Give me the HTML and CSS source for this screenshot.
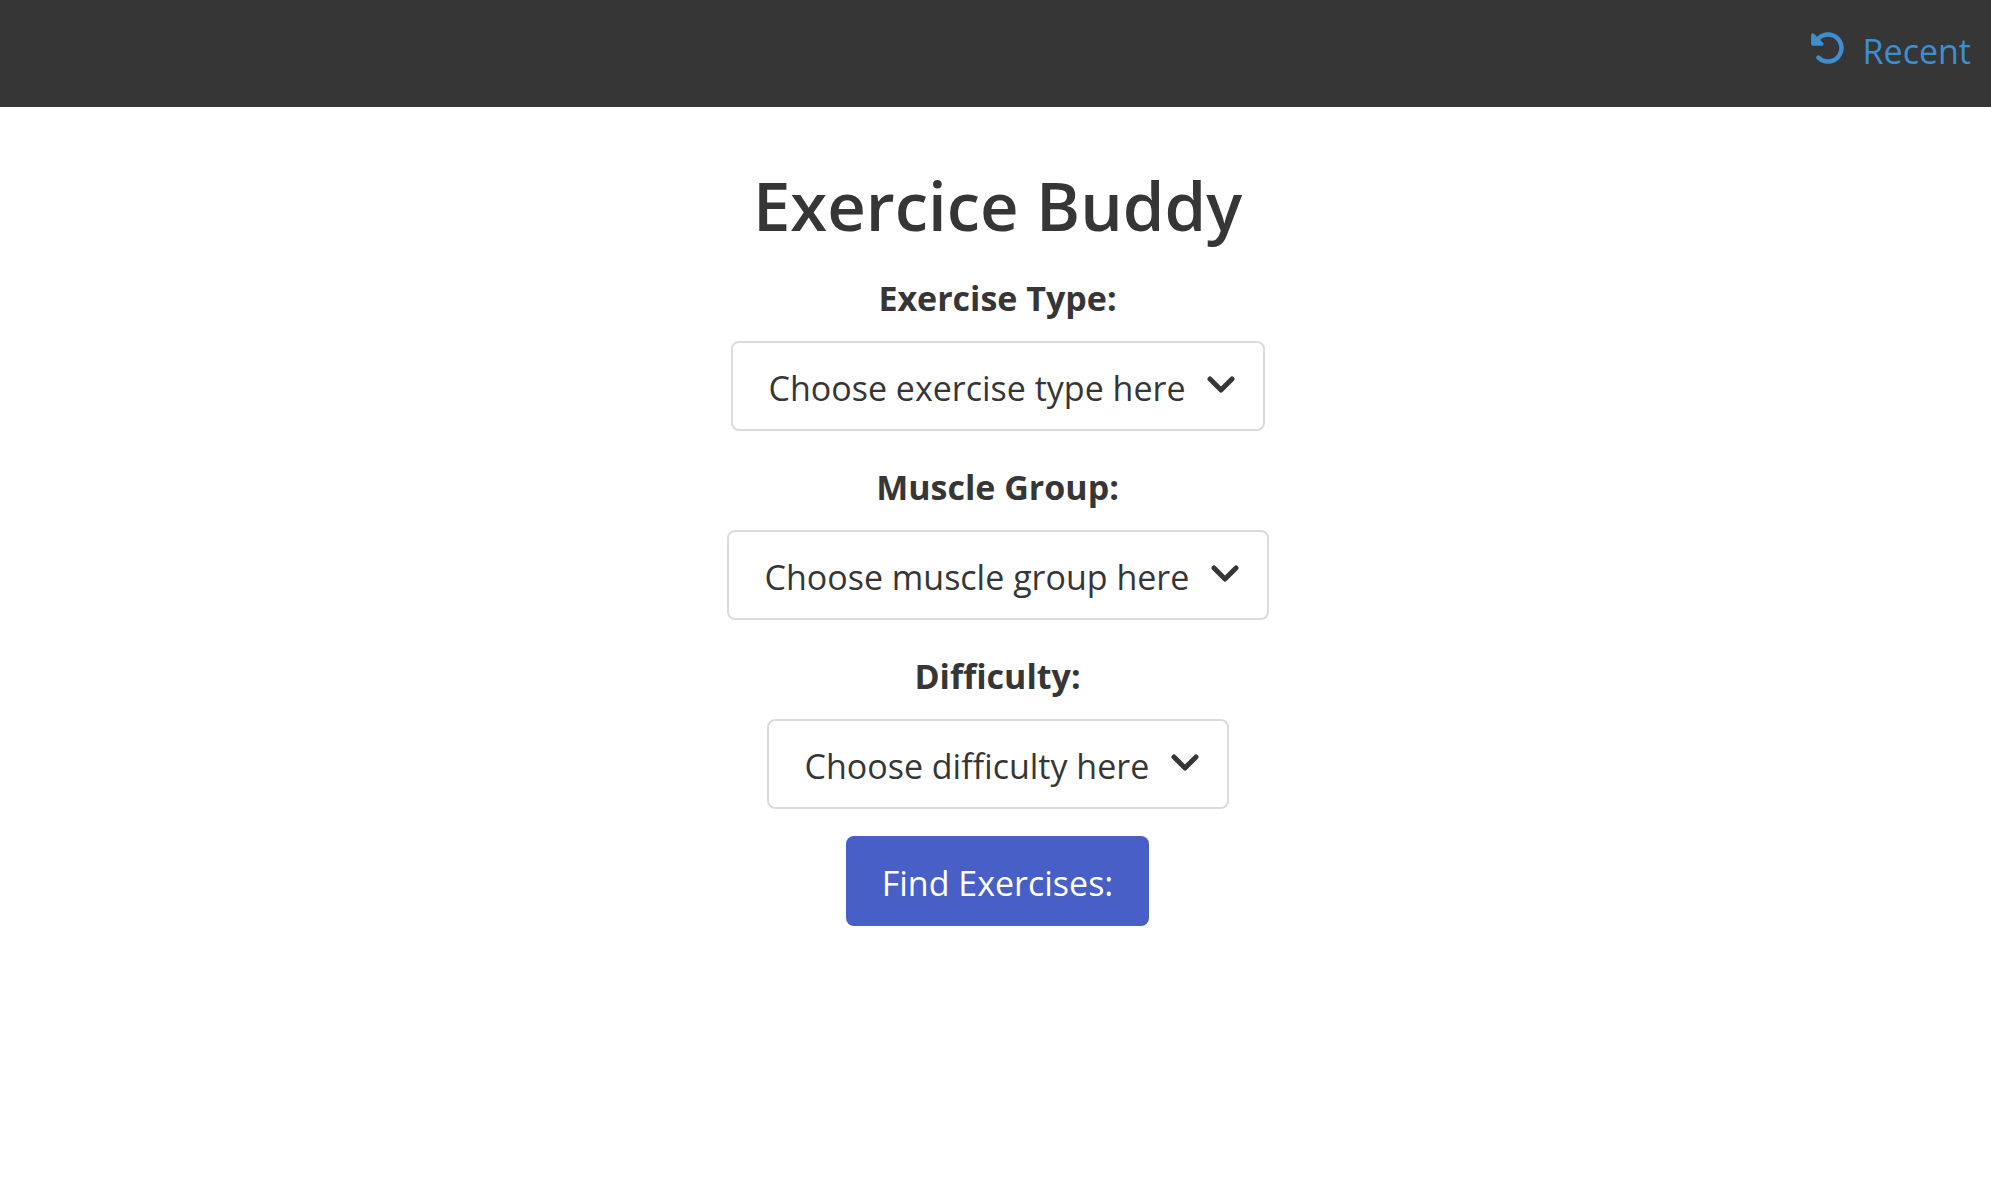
FILE: index.html
```html
<!DOCTYPE html>
<html lang="en">
<head>
<meta charset="utf-8">
<meta name="viewport" content="width=device-width, initial-scale=1">
<title>Exercice Buddy</title>
<link rel="stylesheet" href="styles.css">
</head>
<body>
<nav class="navbar">
  <a class="recent" href="#recent">
    <svg class="recent-icon" viewBox="0 0 512 512" aria-hidden="true"><path fill="currentColor" d="M48.500 224H40c-13.300 0-24-10.700-24-24V72c0-9.700 5.800-18.500 14.800-22.200s19.300-1.700 26.200 5.200L98.600 96.600c87.600-86.500 228.700-86.200 315.800 1c87.500 87.500 87.500 229.300 0 316.800s-229.300 87.500-316.800 0c-12.500-12.500-12.500-32.800 0-45.300s32.800-12.500 45.300 0c62.500 62.500 163.800 62.500 226.300 0s62.500-163.800 0-226.300c-62.200-62.200-162.700-62.500-225.300-1L185 183c6.900 6.900 8.900 17.200 5.200 26.200s-12.500 14.800-22.200 14.800H48.500z"/></svg>
    <span>Recent</span>
  </a>
</nav>
<main class="content">
  <h1 class="title">Exercice Buddy</h1>
  <form class="finder">
    <div class="fields">
      <div class="field">
        <label class="label" for="type">Exercise Type:</label>
        <div class="dropdown">
          <select class="select" id="type"><option>Choose exercise type here</option><option>Cardio</option><option>Strength</option></select>
          <svg class="arrow" viewBox="0 0 28 18" aria-hidden="true"><path d="M3 3 14 14 25 3"/></svg>
        </div>
      </div>
      <div class="field">
        <label class="label" for="muscle">Muscle Group:</label>
        <div class="dropdown">
          <select class="select" id="muscle"><option>Choose muscle group here</option><option>Biceps</option><option>Chest</option></select>
          <svg class="arrow" viewBox="0 0 28 18" aria-hidden="true"><path d="M3 3 14 14 25 3"/></svg>
        </div>
      </div>
      <div class="field">
        <label class="label" for="difficulty">Difficulty:</label>
        <div class="dropdown">
          <select class="select" id="difficulty"><option>Choose difficulty here</option><option>Beginner</option><option>Expert</option></select>
          <svg class="arrow" viewBox="0 0 28 18" aria-hidden="true"><path d="M3 3 14 14 25 3"/></svg>
        </div>
      </div>
    </div>
    <button class="submit" type="button">Find Exercises:</button>
  </form>
</main>
</body>
</html>
```
FILE: styles.css
```css
* { box-sizing: border-box; }
body {
  margin: 0;
  background: #fff;
  color: #363636;
  font-family: "Segoe UI", "Open Sans", "Noto Sans", sans-serif;
  font-size: 34px;
  line-height: 54px;
}
.navbar {
  display: flex;
  justify-content: flex-end;
  align-items: center;
  min-height: 107px;
  padding: 0 20px 5px;
  background: #363636;
}
.recent {
  display: flex;
  align-items: center;
  gap: 17px;
  color: #3e8ed0;
  text-decoration: none;
}
.recent-icon { width: 36px; height: 36px; margin-bottom: 6px; }
.content {
  display: flex;
  flex-direction: column;
  align-items: center;
  padding: 58px 0 60px 4px;
}
.title {
  margin: 0;
  font-size: 67px;
  font-weight: 600;
  line-height: 80px;
}
.finder {
  display: flex;
  flex-direction: column;
  align-items: center;
  gap: 27px;
  padding-top: 26px;
}
.fields {
  display: flex;
  flex-direction: column;
  gap: 29px;
}
.field {
  display: flex;
  flex-direction: column;
  align-items: center;
  gap: 16px;
}
.label { font-weight: 700; }
.dropdown { display: grid; align-items: center; }
.select, .arrow { grid-area: 1 / 1; }
.select {
  appearance: none;
  height: 90px;
  padding: 4px 77px 0 36px;
  border: 2px solid #dbdbdb;
  border-radius: 8px;
  background: #fff;
  color: inherit;
  font: inherit;
}
.arrow {
  justify-self: end;
  width: 28px;
  height: 18px;
  margin: 0 30px 2px 0;
  fill: none;
  stroke: #363636;
  stroke-width: 5;
  stroke-linecap: round;
  stroke-linejoin: round;
  pointer-events: none;
}
.submit {
  height: 90px;
  padding: 4px 36px 0;
  border: 0;
  border-radius: 8px;
  background: #485fc7;
  color: #fff;
  font: inherit;
}
```
